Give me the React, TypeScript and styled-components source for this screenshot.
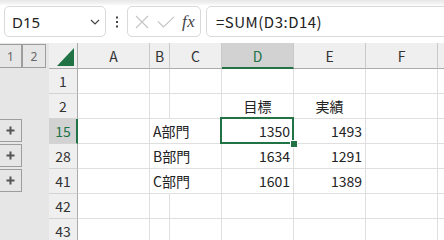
import React from 'react';
import styled, { createGlobalStyle, css } from 'styled-components';

const Global = createGlobalStyle`
  html, body { margin: 0; padding: 0; background: #fff; }
  body {
    width: 444px; height: 240px; overflow: hidden;
    font-family: "Noto Sans CJK JP", "Noto Sans", sans-serif;
  }
`;

const GREEN = '#217346';

const Toolbar = styled.div`
  display: flex;
  align-items: flex-start;
  height: 43px;
  box-sizing: border-box;
  padding: 6px 0 0 4px;
  background: linear-gradient(#e8e8e8 0px, #f1f1f1 3px, #fff 6px);
  overflow: hidden;
`;

const Box = styled.div`
  height: 31px;
  box-sizing: border-box;
  border: 1px solid #dadada;
  border-radius: 5px;
  background: #fff;
  display: flex;
  align-items: center;
`;

const NameBox = styled(Box)`
  width: 102px;
  flex: none;
  justify-content: space-between;
  padding: 0 5px 0 7px;
  font-family: "Noto Sans", sans-serif;
  font-size: 15px;
  color: #222;
`;

const Grip = styled.div`
  width: 21px;
  height: 31px;
  flex: none;
  display: flex;
  align-items: center;
  justify-content: center;
`;

const ActionBox = styled(Box)`
  width: 74px;
  flex: none;
  padding: 0 0 0 6px;
`;

const Fx = styled.span`
  font-family: "Liberation Serif", "DejaVu Serif", serif;
  font-style: italic;
  font-size: 17px;
  color: #444;
  margin-left: 7px;
  letter-spacing: 0.5px;
`;

const FormulaBox = styled(Box)`
  flex: 1;
  margin-left: 5px;
  margin-right: -10px;
  padding-left: 9px;
  font-size: 15px;
  letter-spacing: 0.5px;
  color: #222;
`;

const Sheet = styled.div`
  position: relative;
  display: grid;
  grid-template-columns: 49px 29px 72px 20px 52px 72px 72px 72px 1fr;
  grid-template-rows: 26px repeat(7, 25px);
  font-size: 14px;
  color: #222;
`;

const Outline = styled.div`
  background: #e6e6e6;
  display: flex;
  align-items: flex-start;
`;

const LevelButton = styled.div<{ $first?: boolean }>`
  width: ${p => (p.$first ? 23 : 24)}px;
  height: 24px;
  margin-top: 1px;
  margin-left: ${p => (p.$first ? -1 : 0)}px;
  box-sizing: border-box;
  border: 1px solid #9d9d9d;
  background: #e6e6e6;
  display: flex;
  align-items: center;
  justify-content: center;
  font-family: "Noto Sans", sans-serif;
  font-size: 12px;
  color: #666;
`;

const ExpandButton = styled.div`
  width: 23px;
  height: 23px;
  margin-left: -1px;
  box-sizing: border-box;
  border: 1px solid #9d9d9d;
  background: #e6e6e6;
  display: flex;
  align-items: center;
  justify-content: center;
`;

const Corner = styled.div`
  background: #efefef;
  box-sizing: border-box;
  border-right: 1px solid #ababab;
  border-bottom: 1px solid #ababab;
  display: flex;
  align-items: flex-end;
  justify-content: flex-end;
  padding: 0 3px 2px 0;
`;

const ColHeader = styled.div<{ $selected?: boolean }>`
  box-sizing: border-box;
  background: ${p => (p.$selected ? '#d2d2d2' : '#efefef')};
  color: ${p => (p.$selected ? GREEN : '#333')};
  border-right: 1px solid #c9c9c9;
  border-bottom: ${p => (p.$selected ? `2px solid ${GREEN}` : '1px solid #ababab')};
  display: flex;
  align-items: center;
  justify-content: center;
  padding-top: ${p => (p.$selected ? 1 : 0)}px;
`;

const RowHeader = styled.div<{ $selected?: boolean }>`
  box-sizing: border-box;
  background: ${p => (p.$selected ? '#d2d2d2' : '#efefef')};
  color: ${p => (p.$selected ? GREEN : '#333')};
  border-right: ${p => (p.$selected ? `2px solid ${GREEN}` : '1px solid #ababab')};
  border-bottom: 1px solid #d4d4d4;
  display: flex;
  align-items: center;
  justify-content: center;
  padding-left: ${p => (p.$selected ? 1 : 0)}px;
`;

const Cell = styled.div<{ $align?: 'left' | 'right' | 'center'; $overflow?: boolean }>`
  box-sizing: border-box;
  border-right: 1px solid ${p => (p.$overflow ? 'transparent' : '#dfdfdf')};
  border-bottom: 1px solid #dfdfdf;
  display: flex;
  align-items: center;
  white-space: nowrap;
  position: relative;
  z-index: ${p => (p.$overflow ? 1 : 0)};
  padding: 0 3px 0 3px;
  ${p =>
    p.$align === 'right'
      ? css`justify-content: flex-end;`
      : p.$align === 'center'
      ? css`justify-content: center;`
      : css`justify-content: flex-start;`}
`;

const Selection = styled.div`
  position: absolute;
  left: 220px;
  top: 74px;
  width: 74px;
  height: 27px;
  box-sizing: border-box;
  border: 2px solid ${GREEN};
  pointer-events: none;
  z-index: 2;
`;

const FillHandle = styled.div`
  position: absolute;
  right: -5px;
  bottom: -5px;
  width: 6px;
  height: 6px;
  background: ${GREEN};
  box-shadow: 0 0 0 1px #fff;
`;

const Chevron = () => (
  <svg width="10" height="6" viewBox="0 0 10 6">
    <polyline points="1,1 5,5 9,1" fill="none" stroke="#444" strokeWidth="1.2" />
  </svg>
);

const Dots = () => (
  <svg width="4" height="12" viewBox="0 0 4 12">
    <rect x="1" y="0.5" width="2" height="2" fill="#444" />
    <rect x="1" y="5" width="2" height="2" fill="#444" />
    <rect x="1" y="9.5" width="2" height="2" fill="#444" />
  </svg>
);

const CancelIcon = () => (
  <svg width="14" height="14" viewBox="0 0 14 14" style={{ marginLeft: 1 }}>
    <path d="M1 1 L13 13 M13 1 L1 13" stroke="#c4c4c4" strokeWidth="1.1" fill="none" />
  </svg>
);

const EnterIcon = () => (
  <svg width="18" height="12" viewBox="0 0 18 12" style={{ marginLeft: 8 }}>
    <path d="M1 5.5 L6.5 11 L17 0.8" stroke="#c4c4c4" strokeWidth="1.1" fill="none" />
  </svg>
);

const Plus = () => (
  <svg width="9" height="9" viewBox="0 0 9 9">
    <path d="M0.5 4.5 H8.5 M4.5 0.5 V8.5" stroke="#555" strokeWidth="2" fill="none" />
  </svg>
);

const Triangle = () => (
  <svg width="17" height="18" viewBox="0 0 17 18">
    <polygon points="17,0 17,18 0,18" fill={GREEN} />
  </svg>
);

type Row = {
  n: number;
  b?: string;
  d?: string | number;
  e?: string | number;
  group?: boolean;
  selected?: boolean;
};

const rows: Row[] = [
  { n: 1 },
  { n: 2, d: '目標', e: '実績' },
  { n: 15, b: 'A部門', d: 1350, e: 1493, group: true, selected: true },
  { n: 28, b: 'B部門', d: 1634, e: 1291, group: true },
  { n: 41, b: 'C部門', d: 1601, e: 1389, group: true },
  { n: 42 },
  { n: 43 },
];

// the last column (G) is only a sliver at the right edge, its letter is off-screen
const cols = ['A', 'B', 'C', 'D', 'E', 'F', ''];

const alignOf = (v: string | number | undefined) =>
  typeof v === 'number' ? 'right' : 'center';

export default function App() {
  return (
    <>
      <Global />
      <Toolbar>
        <NameBox>
          <span>D15</span>
          <Chevron />
        </NameBox>
        <Grip>
          <Dots />
        </Grip>
        <ActionBox>
          <CancelIcon />
          <EnterIcon />
          <Fx>fx</Fx>
        </ActionBox>
        <FormulaBox>=SUM(D3:D14)</FormulaBox>
      </Toolbar>
      <Sheet>
        <Outline>
          <LevelButton $first>1</LevelButton>
          <LevelButton>2</LevelButton>
        </Outline>
        <Corner>
          <Triangle />
        </Corner>
        {cols.map((c, i) => (
          <ColHeader key={i} $selected={c === 'D'}>
            {c}
          </ColHeader>
        ))}
        {rows.map(r => (
          <React.Fragment key={r.n}>
            <Outline>
              {r.group && (
                <ExpandButton>
                  <Plus />
                </ExpandButton>
              )}
            </Outline>
            <RowHeader $selected={r.selected}>{r.n}</RowHeader>
            <Cell />
            <Cell $overflow={!!r.b}>{r.b}</Cell>
            <Cell />
            <Cell $align={alignOf(r.d)}>{r.d}</Cell>
            <Cell $align={alignOf(r.e)}>{r.e}</Cell>
            <Cell />
            <Cell />
          </React.Fragment>
        ))}
        <Selection>
          <FillHandle />
        </Selection>
      </Sheet>
    </>
  );
}
